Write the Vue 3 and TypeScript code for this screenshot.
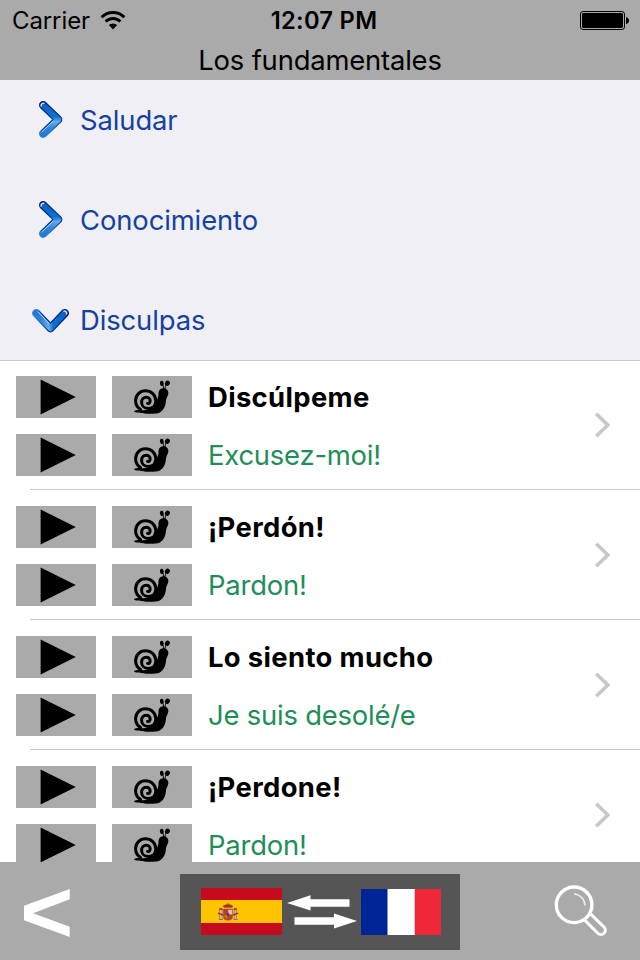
<script setup lang="ts">
interface Section { title: string; open: boolean }
interface Phrase { source: string; target: string }

const sections: Section[] = [
  { title: 'Saludar', open: false },
  { title: 'Conocimiento', open: false },
  { title: 'Disculpas', open: true },
]

const phrases: Phrase[] = [
  { source: 'Discúlpeme', target: 'Excusez-moi!' },
  { source: '¡Perdón!', target: 'Pardon!' },
  { source: 'Lo siento mucho', target: 'Je suis desolé/e' },
  { source: '¡Perdone!', target: 'Pardon!' },
]
</script>

<template>
  <div class="screen">
    <header class="top">
      <div class="status">
        <div class="carrier">
          <span>Carrier</span>
          <svg class="wifi" width="26" height="20" viewBox="0 0 26 20">
            <path d="M1.6 6.3A16.2 16.2 0 0 1 24.4 6.3" fill="none" stroke="#000" stroke-width="3" />
            <path d="M5.6 10.6A10.4 10.4 0 0 1 20.4 10.6" fill="none" stroke="#000" stroke-width="2.9" />
            <path d="M8.8 14.1A6 6 0 0 1 17.2 14.1L13 18.6Z" />
          </svg>
        </div>
        <span class="time">12:07 PM</span>
        <svg class="battery" width="50" height="20" viewBox="0 0 50 20">
          <rect x="0.5" y="1.5" width="44" height="18" rx="2.6" fill="none" stroke="#000" stroke-width="1" />
          <rect x="2" y="3" width="41" height="15" rx="1.4" />
          <path d="M46 7Q49 8 49 10.5Q49 13 46 14Z" />
        </svg>
      </div>
      <h1 class="title">Los fundamentales</h1>
    </header>

    <main class="content">
      <svg class="defs" width="0" height="0">
        <defs>
          <linearGradient id="blue" gradientUnits="userSpaceOnUse" x1="0" y1="2" x2="0" y2="37">
            <stop offset="0" stop-color="#0b5cc0" />
            <stop offset="0.42" stop-color="#0873d0" />
            <stop offset="0.56" stop-color="#69abe8" />
            <stop offset="0.74" stop-color="#3488da" />
            <stop offset="1" stop-color="#1c74d0" />
          </linearGradient>
          <linearGradient id="rim" gradientUnits="userSpaceOnUse" x1="0" y1="2" x2="0" y2="37">
            <stop offset="0" stop-color="#07106e" />
            <stop offset="0.55" stop-color="#0b3b9b" />
            <stop offset="1" stop-color="#3d8ede" />
          </linearGradient>
        </defs>
      </svg>

      <div v-for="section in sections" :key="section.title" class="section">
        <svg class="marker" :class="{ open: section.open }" width="40" height="40" viewBox="0 0 40 40">
          <path d="M13.2 5.2L28.2 19.5L13.2 33.8" fill="none" stroke="url(#rim)" stroke-width="8.4" stroke-linecap="round" stroke-linejoin="round" />
          <path d="M13.2 5.2L28.2 19.5L13.2 33.8" fill="none" stroke="url(#blue)" stroke-width="6" stroke-linecap="round" stroke-linejoin="round" />
          <path d="M11.2 6.1Q11 3.2 13.8 3.5" fill="none" stroke="#d5eaff" stroke-width="1.3" stroke-linecap="round" />
          <path d="M22.5 20.3L11.2 31" fill="none" stroke="#0a3f9f" stroke-width="1" />
          <path d="M23.2 21L11.6 32.2" fill="none" stroke="#a9d5fa" stroke-width="1" />
        </svg>
        <span>{{ section.title }}</span>
      </div>

      <ul class="list">
        <li v-for="(phrase, index) in phrases" :key="index" class="cell">
          <div class="rows">
            <div v-for="line in 2" :key="line" class="line">
              <button class="action" type="button">
                <svg width="80" height="42" viewBox="0 0 80 42"><path d="M24.6 3.6L59.8 21L24.6 38.4Z" /></svg>
              </button>
              <button class="action" type="button">
                <svg width="80" height="42" viewBox="0 0 80 42">
                  <path d="M22 35C25 33.6 27.5 34.2 30.5 34.2C37 34.6 42.5 31 44.3 26C45.5 22.5 46.8 20.5 46.5 17C46.6 14 48.8 12.2 51.5 12.2C54.8 12.2 56.8 14.8 56.3 17.8C55.9 20.2 54.3 21.5 54 24.5C53.6 30 51.6 34.4 47.8 36.4C45 37.8 41 37.7 36 37.7C31 37.7 29 36.7 26 36.5C24.2 36.4 22 36.4 22 35Z" />
                  <path d="M28.6 33.6C25 31.4 23.6 28 23.6 24.8C23.6 19 28 14.8 33.4 14.8C39.2 14.8 43.8 18.8 43.8 24.7C43.8 29.8 40.3 32.4 36.4 32.4C32.4 32.4 29.6 29.8 29.6 26.4C29.6 23.2 31.7 21.2 34.2 21.2C36.6 21.2 38.2 22.8 38.2 24.9C38.2 26.8 36.8 27.7 35.5 27.4" fill="none" stroke="#000" stroke-width="3" stroke-linecap="round" />
                  <path d="M50 7.2Q51.6 9.4 51.6 13M54.4 8Q53.2 10 53 13" fill="none" stroke="#000" stroke-width="0.9" />
                  <ellipse cx="49.8" cy="7.4" rx="1.9" ry="2.7" transform="rotate(-10 49.8 7.4)" />
                  <ellipse cx="55.4" cy="7.2" rx="2.3" ry="2.7" transform="rotate(40 55.4 7.2)" />
                </svg>
              </button>
              <span :class="line === 1 ? 'source' : 'target'">{{ line === 1 ? phrase.source : phrase.target }}</span>
            </div>
          </div>
          <svg class="chevron" width="20" height="28" viewBox="0 0 20 28">
            <path d="M3.2 2.7L14.8 14L3.2 25.3" fill="none" stroke="#c7c7cc" stroke-width="3.6" />
          </svg>
        </li>
      </ul>
    </main>

    <footer class="bottom">
      <svg class="back" width="48" height="50" viewBox="0 0 48 50">
        <path d="M46.7 1V11.3L10 25.2L46.7 38.7V49L1 32.3V17.7Z" fill="#fff" />
      </svg>
      <div class="languages">
        <svg width="81" height="47" viewBox="0 0 81 47">
          <rect width="81" height="47" fill="#c60b1e" />
          <rect y="12" width="81" height="23" fill="#ffc400" />
          <g stroke="#a0603a" stroke-width="0.5">
            <rect x="18.6" y="21.5" width="2.5" height="10" fill="#c5b59a" />
            <rect x="33.2" y="21.5" width="2.5" height="10" fill="#c5b59a" />
            <path d="M22.2 21H31.8V28Q31.8 32.3 27 32.3Q22.2 32.3 22.2 28Z" fill="#bf3b25" />
            <path d="M23 19.6Q20.8 17.6 24 17Q27 15.7 30 17Q33.2 17.6 31 19.6Z" fill="#b52b20" />
          </g>
          <rect x="27.2" y="21.8" width="4" height="4.7" fill="#dcc1cc" />
          <path d="M23.2 27H26.5V31Q23.5 30.5 23.2 28Z" fill="#d36e16" />
          <ellipse cx="27" cy="26.5" rx="1.4" ry="1.7" fill="#285277" />
          <path d="M17 25.2L22.2 27.2M37.2 25.2L32 27.2M18.2 21H21.4M32.8 21H36" stroke="#b91d21" stroke-width="1.4" />
          <path d="M17.8 31.5H22M32.5 31.5H36.7" stroke="#648090" stroke-width="1" />
          <path d="M27 15.2V17.2M25.3 16.2H28.7" stroke="#8d6a20" stroke-width="0.8" />
        </svg>
        <svg width="79" height="47" viewBox="0 0 79 47">
          <path d="M5 15L28.5 7.3V11.3H67.5V18.7H28.5V22.5Z" fill="#fff" />
          <path d="M75 33L52 25.5V29.3H12.5V36.7H52V40.5Z" fill="#fff" />
        </svg>
        <svg width="80" height="47" viewBox="0 0 80 47">
          <rect y="1" width="27" height="46" fill="#002395" />
          <rect x="26.5" y="1" width="27.5" height="46" fill="#fff" />
          <rect x="53.7" y="1" width="26.3" height="46" fill="#ed2939" />
        </svg>
      </div>
      <svg class="search" width="56" height="56" viewBox="0 0 56 56" fill="none" stroke="#fff">
        <circle cx="20.1" cy="20.8" r="17.8" stroke-width="3.4" />
        <path d="M20 9.8A12 12 0 0 1 31 21.5" stroke-width="1.7" stroke-opacity="0.75" />
        <path d="M31 36.4L43.8 49.2A4.4 4.4 0 0 0 50.4 43.4L36.8 30.2" stroke-width="3" />
      </svg>
    </footer>
  </div>
</template>

<style>
body { margin: 0; }
</style>

<style scoped>
.screen {
  display: flex;
  flex-direction: column;
  width: 640px;
  height: 960px;
  overflow: hidden;
  background: #fff;
  font-family: Inter, "Liberation Sans", sans-serif;
}
.top { flex: none; height: 80px; background: #aaa; color: #000; }
.status {
  display: grid;
  grid-template-columns: 1fr auto 1fr;
  align-items: center;
  height: 40px;
  padding: 0 10px 0 12px;
  font-size: 24px;
}
.carrier { display: flex; align-items: center; gap: 10px; letter-spacing: -0.1px; }
.wifi { margin-top: 2px; }
.time { font-weight: 600; font-size: 23.7px; letter-spacing: 0.3px; padding-left: 6px; }
.battery { justify-self: end; }
.title {
  margin: 0;
  line-height: 40px;
  font-size: 27.4px;
  font-weight: 400;
  letter-spacing: -0.18px;
  text-align: center;
}
.content { flex: 1; min-height: 0; overflow: hidden; }
.defs { display: block; }
.section {
  box-sizing: border-box;
  display: flex;
  align-items: center;
  gap: 10px;
  height: 100px;
  padding: 0 30px 20px;
  background: #efeff4;
  color: #1641a1;
  font-size: 27.4px;
  letter-spacing: -0.1px;
}
.marker.open { transform: rotate(90deg); }
.list {
  margin: -20px 0 0;
  padding: 0;
  list-style: none;
  border-top: 1px solid #c8c7cc;
  background: #fff;
}
.cell {
  box-sizing: border-box;
  display: flex;
  justify-content: space-between;
  align-items: center;
  height: 130px;
  padding: 0 27px 1px 16px;
  background: linear-gradient(#c8c7cc, #c8c7cc) 30px 128px / 610px 1px no-repeat;
}
.rows { display: flex; flex-direction: column; gap: 16px; }
.line { display: flex; align-items: center; gap: 16px; height: 42px; font-size: 27.4px; }
.action { display: block; width: 80px; height: 42px; padding: 0; border: 0; background: #aaa; }
.action svg { display: block; }
.source { font-weight: 700; letter-spacing: 0.36px; color: #000; }
.target { letter-spacing: -0.2px; color: #218e58; }
.chevron { margin-bottom: 2px; }
.bottom {
  flex: none;
  box-sizing: border-box;
  display: grid;
  grid-template-columns: 157px 280px 1fr;
  align-items: center;
  height: 98px;
  padding: 2px 30px 0 23px;
  background: #aaa;
}
.back { margin-top: 1px; }
.languages {
  display: flex;
  justify-content: center;
  box-sizing: border-box;
  width: 280px;
  height: 76px;
  padding: 14px 0 0 2px;
  background: #555;
}
.search { justify-self: end; }
</style>
